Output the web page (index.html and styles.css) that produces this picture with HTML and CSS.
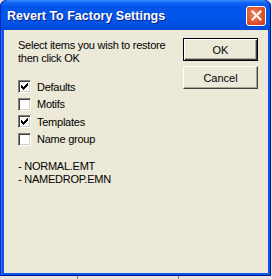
FILE: index.html
```html
<!DOCTYPE html>
<html lang="en">
<head>
  <meta charset="UTF-8" />
  <title>Revert To Factory Settings</title>
  <link rel="stylesheet" href="styles.css">
</head>
<body>

  <div class="window">
    <div class="titlebar">
      <span class="title">Revert To Factory Settings</span>
      <button class="close" title="Close">
        <svg width="11" height="11" viewBox="0 0 11 11">
          <path d="M1.5 1.5 L9.5 9.5 M9.5 1.5 L1.5 9.5" stroke="#fff" stroke-width="2" stroke-linecap="square" />
        </svg>
      </button>
    </div>

    <div class="client">
      <div class="main">
        <p class="prompt">Select items you wish to restore<br>then click OK</p>
        <ul class="options">
          <li><span class="check on"></span>Defaults</li>
          <li><span class="check"></span>Motifs</li>
          <li><span class="check on"></span>Templates</li>
          <li><span class="check"></span>Name group</li>
        </ul>
        <div class="files">- NORMAL.EMT<br>- NAMEDROP.EMN</div>
      </div>
      <div class="actions">
        <button class="btn btn-default">OK</button>
        <button class="btn">Cancel</button>
      </div>
    </div>
  </div>

  <div class="desk-strip">
    <span class="sep"></span>
    <span class="sep"></span>
  </div>

</body>
</html>
```

FILE: styles.css
```css
body {
  margin: 0;
  background: #e4e4e4;
  font-family: "Liberation Sans", Arial, sans-serif;
  font-size: 11px;
  color: #000;
}

.window {
  width: 271px;
  height: 276px;
  box-sizing: border-box;
  padding: 0 3px 3px 4px;
  display: flex;
  flex-direction: column;
  background: #0a57ec;
  border-radius: 7px 7px 0 0;
  box-shadow: inset 1px 0 #0027c4, inset -1px 0 #00138f, inset 0 -1px #00138f, inset 2px 0 #2a74ff;
}

.titlebar {
  height: 30px;
  margin: 0 -3px 0 -4px;
  padding: 0 5px 0 7px;
  display: flex;
  align-items: center;
  justify-content: space-between;
  border-radius: 7px 7px 0 0;
  background: linear-gradient(#3b8cff 0, #0f63f5 3px, #0055e8 7px, #0056ea 60%, #004fe0 85%, #0046d2 100%);
  box-shadow: inset 1px 0 #0027c4, inset -1px 0 #00138f;
}

.title {
  color: #fff;
  font-weight: bold;
  font-size: 12.5px;
  text-shadow: 1px 1px #0a1d8a;
  padding-top: 1px;
}

.close {
  width: 20px;
  height: 20px;
  margin-top: 1px;
  padding: 0;
  display: flex;
  align-items: center;
  justify-content: center;
  border: 1px solid #fff;
  border-radius: 3px;
  background: radial-gradient(circle at 40% 40%, #ee8560 0, #dd5530 55%, #c23c18 100%);
}

.client {
  flex: 1;
  display: flex;
  background: #ece9d8;
  padding: 8px 10px 0 14px;
  letter-spacing: -0.25px;
}

.main {
  flex: 1;
}

.prompt {
  margin: 1px 0 0;
  line-height: 13px;
}

.options {
  list-style: none;
  margin: 13px 0 0;
  padding: 0;
}

.options li {
  height: 17.5px;
  display: flex;
  align-items: center;
  gap: 6px;
}

.check {
  width: 13px;
  height: 13px;
  box-sizing: border-box;
  background: #fff;
  border-style: solid;
  border-width: 1px;
  border-color: #808080 #fff #fff #808080;
  box-shadow: inset 1px 1px #404040, inset -1px -1px #d4d0c8;
  position: relative;
}

.check.on::after {
  content: "";
  position: absolute;
  left: 2px;
  top: 2px;
  width: 7px;
  height: 7px;
  background: no-repeat center/7px 7px url("data:image/svg+xml;utf8,<svg xmlns='http://www.w3.org/2000/svg' width='7' height='7' viewBox='0 0 7 7'><path d='M0 2h1v1h1v1h1v-1h1v-1h1v-1h1v-1h1v3h-1v1h-1v1h-1v1h-1v1h-1v-1h-1v-1h-1z' fill='black'/></svg>");
}

.files {
  margin-top: 12px;
  line-height: 13px;
}

.actions {
  width: 75px;
  display: flex;
  flex-direction: column;
  gap: 5px;
  letter-spacing: 0;
}

.btn {
  width: 75px;
  height: 23px;
  padding: 0;
  font-family: inherit;
  font-size: 11px;
  color: #000;
  background: #ece9d8;
  border-style: solid;
  border-width: 1px;
  border-color: #fff #404040 #404040 #fff;
  box-shadow: inset -1px -1px #aca899;
}

.btn-default {
  border: 1px solid #000;
  box-shadow: inset 1px 1px #fff, inset -1px -1px #404040, inset -2px -2px #aca899;
}

.desk-strip {
  height: 3px;
  display: flex;
  gap: 100px;
  padding-left: 77px;
}

.sep {
  width: 1px;
  background: #808080;
}
```
